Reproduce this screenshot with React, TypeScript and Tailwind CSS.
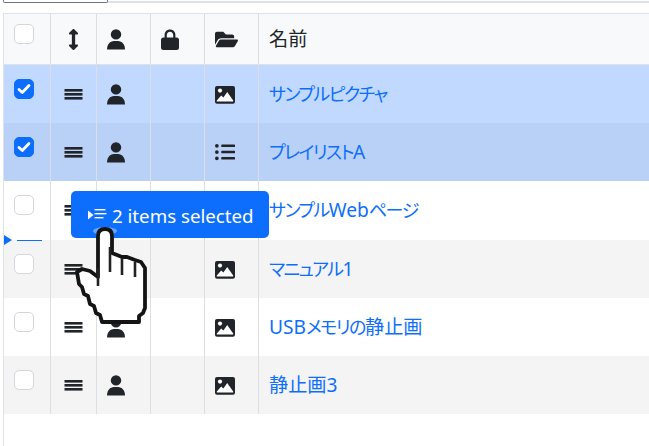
import React from "react";
import { FaArrowsAltV, FaFolderOpen, FaListUl } from "react-icons/fa";

function Bars() {
  return (
    <svg width="19" height="11" viewBox="0 0 19 11" className="block" fill="#212529">
      <rect x="0.5" y="0" width="18" height="2.6" />
      <rect x="0.5" y="4" width="18" height="2.6" />
      <rect x="0.5" y="8" width="18" height="2.6" />
    </svg>
  );
}

function Person() {
  return (
    <svg width="18" height="21" viewBox="0 0 18 21" className="block" fill="#212529">
      <circle cx="9" cy="5.4" r="5.2" />
      <path d="M0 20.5 C0 15.5 3 12 7 12 H11 C15 12 18 15.5 18 20.5 Z" />
    </svg>
  );
}

function Lock() {
  return (
    <svg width="18" height="21" viewBox="0 0 18 21" className="block" fill="#212529">
      <path d="M3.6 9 V6 C3.6 2.6 6 0.5 9 0.5 C12 0.5 14.4 2.6 14.4 6 V9 H12.2 V6 C12.2 4 10.8 2.7 9 2.7 C7.2 2.7 5.8 4 5.8 6 V9 Z" />
      <rect x="0" y="8.5" width="18" height="12.5" rx="2.5" />
    </svg>
  );
}

function PictureIcon() {
  return (
    <svg width="20" height="18" viewBox="0 0 20 18" className="block">
      <rect x="0" y="0" width="20" height="17.7" rx="2" fill="#212529" />
      <circle cx="5" cy="4.6" r="2.1" fill="#fff" />
      <path d="M1.8 15.6 L1.8 14.4 L6.2 9.6 L8.4 11.4 L12.2 6 L18.2 14.4 L18.2 15.6 Z" fill="#fff" />
    </svg>
  );
}

function Box({ checked }: { checked?: boolean }) {
  return (
    <div
      className={
        "w-5 h-5 rounded-[5px] border flex items-center justify-center " +
        (checked ? "bg-[#0d6efd] border-[#0d6efd]" : "bg-white border-[#d3d7db]")
      }
    >
      {checked && (
        <svg width="14" height="12" viewBox="0 0 14 12">
          <path d="M2 6.5 L5.3 9.5 L12 2.5" fill="none" stroke="#fff" strokeWidth="2.8" strokeLinecap="round" strokeLinejoin="round" />
        </svg>
      )}
    </div>
  );
}

function Kana({ children }: { children: React.ReactNode }) {
  return <span className="text-[18px] tracking-[-1.5px]">{children}</span>;
}

const rows = [
  { id: 1, name: <Kana>サンプルピクチャ</Kana>, bg: "bg-[#c1d9ff]", h: "h-[58px]", checked: true, kind: "image" },
  { id: 2, name: <><Kana>プレイリスト</Kana>A</>, bg: "bg-[#b9d1f7]", h: "h-[58px]", checked: true, kind: "list" },
  { id: 3, name: <><Kana>サンプル</Kana>Web<Kana>ページ</Kana></>, bg: "bg-white", h: "h-[59px]", checked: false, kind: "web" },
  { id: 4, name: <><Kana>マニュアル</Kana>1</>, bg: "bg-[#f4f4f5]", h: "h-[58px]", checked: false, kind: "image" },
  { id: 5, name: <>USB<Kana>メモリの</Kana>静止画</>, bg: "bg-white", h: "h-[58px]", checked: false, kind: "image" },
  { id: 6, name: <>静止画3</>, bg: "bg-[#f4f4f5]", h: "h-[58px]", checked: false, kind: "image" },
];

const cell = "border-l border-[#dcdee3] align-top p-0";

export default function App() {
  return (
    <div
      className="relative w-[649px] h-[446px] overflow-hidden bg-white text-[#212529] text-[19.2px] [font-feature-settings:'palt']"
      style={{ fontFamily: '"Noto Sans", "Noto Sans CJK JP", sans-serif' }}
    >
      <div className="flex h-[3px] ml-[3px] mb-[10px]">
        <div className="w-[105px] border-b border-x border-[#6c757d] rounded-b-[2px]" />
        <div className="flex-1 border-b-2 border-[#dee2e6]" />
      </div>

      <div className="ml-[3px] h-[433px] border-l border-[#dee2e6]">
        <table className="w-[700px] table-fixed border-separate border-spacing-0">
          <colgroup>
            <col className="w-[46px]" />
            <col className="w-[46px]" />
            <col className="w-[54px]" />
            <col className="w-[54px]" />
            <col className="w-[54px]" />
            <col />
          </colgroup>
          <thead>
            <tr className="bg-[#f8f9fa]">
              <th className="h-[52px] border-y border-[#dee2e6] align-top p-0 font-normal">
                <div className="pt-[10px] pl-[10px]"><Box /></div>
              </th>
              <th className={"border-y border-y-[#dee2e6] font-normal " + cell}>
                <div className="pt-[15px] flex justify-center"><FaArrowsAltV size={21} className="block" color="#212529" /></div>
              </th>
              <th className={"border-y border-y-[#dee2e6] font-normal " + cell}>
                <div className="pt-[15px] pl-[10px]"><Person /></div>
              </th>
              <th className={"border-y border-y-[#dee2e6] font-normal " + cell}>
                <div className="pt-[15px] pl-[10px]"><Lock /></div>
              </th>
              <th className={"border-y border-y-[#dee2e6] font-normal " + cell}>
                <div className="pt-[14px] pl-[10px]"><FaFolderOpen size={23} className="block" color="#212529" /></div>
              </th>
              <th className={"border-y border-y-[#dee2e6] font-normal text-left " + cell}>
                <div className="pt-[10px] pl-[10px] leading-[29px]">名前</div>
              </th>
            </tr>
          </thead>
          <tbody>
            {rows.map((r) => (
              <tr key={r.id} className={r.bg}>
                <td className={"align-top p-0 " + r.h}>
                  <div className="pt-[14px] pl-[10px]"><Box checked={r.checked} /></div>
                </td>
                <td className={cell}>
                  <div className="pt-[24px] flex justify-center"><Bars /></div>
                </td>
                <td className={cell}>
                  <div className="pt-[19px] pl-[10px]"><Person /></div>
                </td>
                <td className={cell} />
                <td className={cell}>
                  <div className="pt-[21px] pl-[10px]">
                    {r.kind === "list" ? (
                      <FaListUl size={20} className="block -mt-[2px]" color="#212529" />
                    ) : r.kind === "image" ? (
                      <PictureIcon />
                    ) : null}
                  </div>
                </td>
                <td className={cell}>
                  <div className="pt-[14px] pl-[10px] leading-[29px] text-[#0d6efd] whitespace-nowrap">{r.name}</div>
                </td>
              </tr>
            ))}
          </tbody>
        </table>
      </div>

      {/* drop indicator */}
      <div className="absolute left-[4px] top-[235px] flex items-center">
        <div className="w-0 h-0 border-y-[5px] border-y-transparent border-l-[8px] border-l-[#0d6efd]" />
        <div className="ml-[5px] w-[25px] h-px bg-[#0d6efd]" />
      </div>

      {/* drag ghost */}
      <div className="absolute left-[71px] top-[191px] w-[198px] h-[47px] rounded-[5px] bg-[#0d6efd] flex items-center pl-[17px] pt-[3px] text-white text-[18.7px]">
        <svg width="19" height="14" viewBox="0 0 19 14" fill="#fff" className="block mr-[5px] -mt-[3px]">
          <path d="M0 2.5 L5.5 7 L0 11.5 Z" />
          <rect x="6.5" y="1" width="11" height="1.4" />
          <rect x="6.5" y="5" width="12" height="1.4" />
          <rect x="6.5" y="9" width="9" height="1.4" />
        </svg>
        <span className="whitespace-nowrap">2 items selected</span>
      </div>

      {/* hand cursor */}
      <svg width="649" height="446" viewBox="0 0 649 446" className="absolute left-0 top-0 pointer-events-none blur-[0.7px]">
        <ellipse cx="105" cy="231" rx="12" ry="4" fill="#8fbaff" opacity="0.7" />
        <path
          d="M98 236 Q98 229 105 229 Q112 229 112 236 L112 253 L122 257 L127 257 L135 260 L141 262 L145 268 L145 308 L143 313 L139 316 L139 322 L102 322 L100 315 L96 313 L94 306 L90 304 L88 296 L84 294 L82 287 L79 284 L77 272 L82 269 L90 271 L98 277 Z"
          fill="#fff"
          stroke="#141414"
          strokeWidth="3.8"
          strokeLinejoin="round"
        />
        <path d="M98 268 V286 M110 247 V272 M122 258 V275 M135 262 V277" fill="none" stroke="#222" strokeWidth="2.6" />
      </svg>
    </div>
  );
}
